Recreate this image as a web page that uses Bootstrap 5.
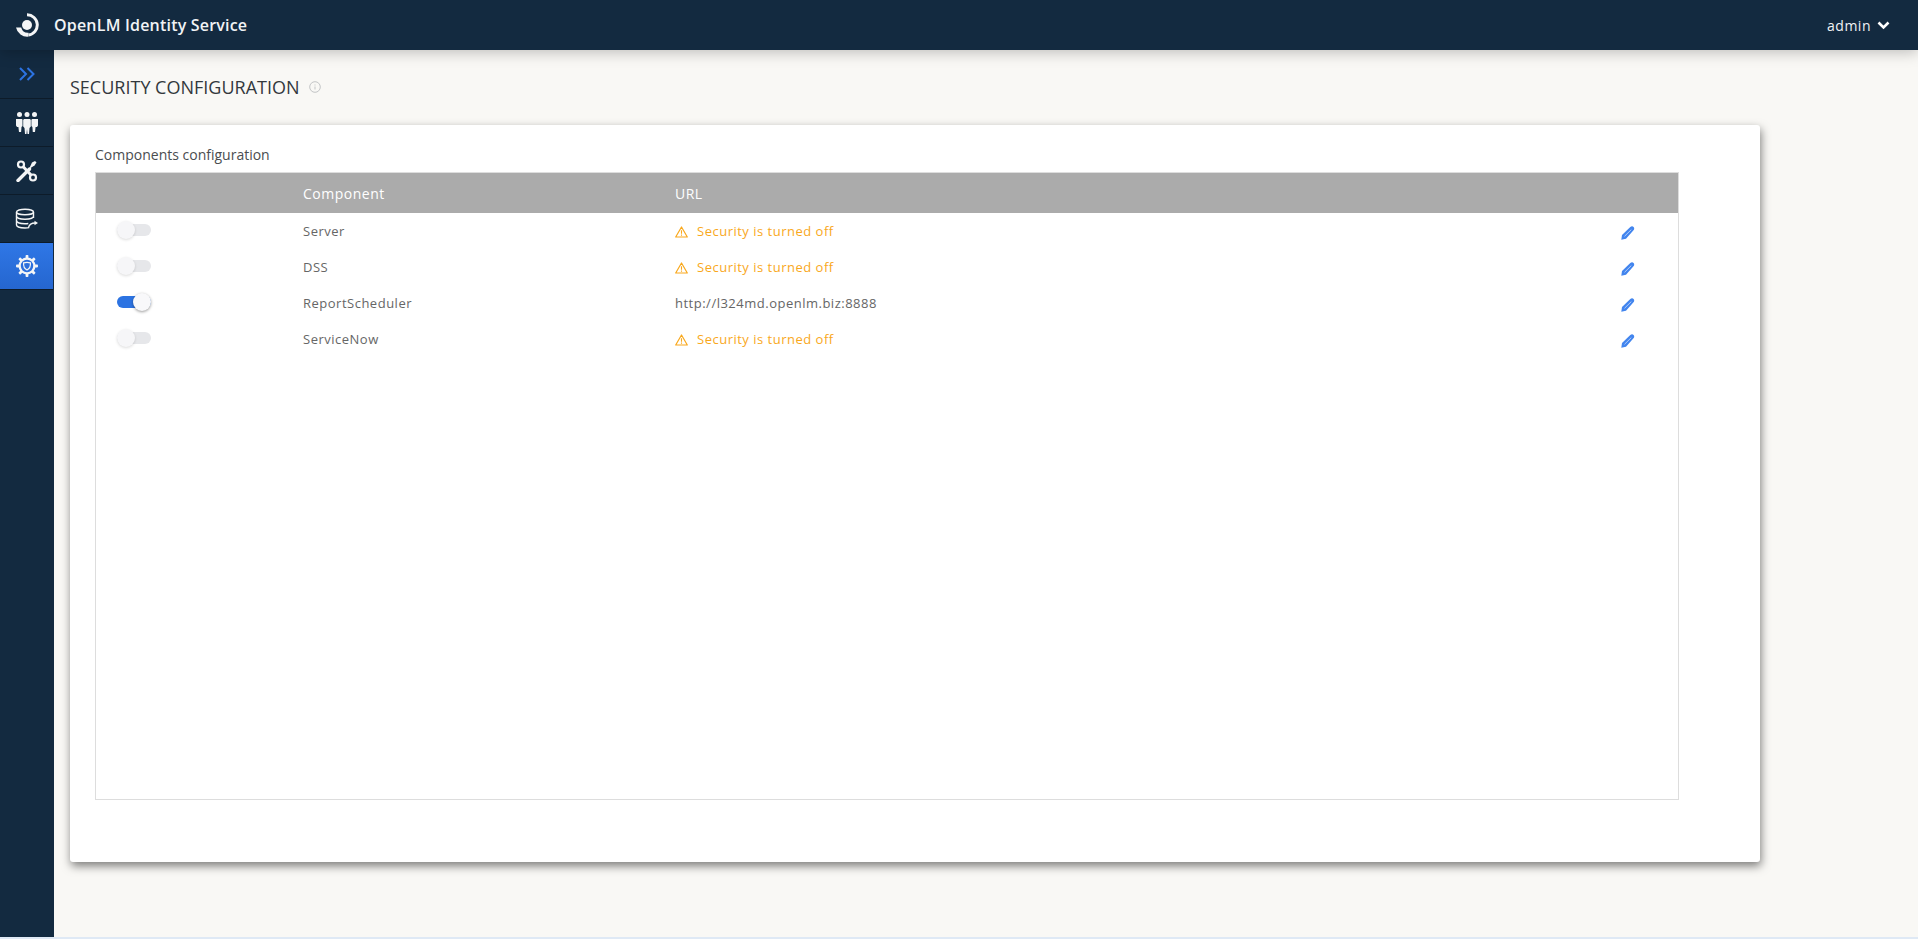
<!DOCTYPE html>
<html lang="en">
<head>
  <meta charset="UTF-8">
  <meta name="viewport" content="width=device-width, initial-scale=1.0">
  <title>OpenLM Identity Service</title>
  <link href="https://cdn.jsdelivr.net/npm/bootstrap@5.3.2/dist/css/bootstrap.min.css" rel="stylesheet">
  <style>
    html, body { height: 100%; }
    body { font-family: "Open Sans", "Liberation Sans", sans-serif; background: #dfe9f5; overflow: hidden; }
    .app-shell { height: 937px; }
    .top-bar { height: 50px; background: #132a40; color: #f1f3f5; padding: 0 28px 0 15px; box-shadow: 0 2px 14px rgba(0,0,0,.25); position: relative; z-index: 2; }
    .brand-text { font-size: 16px; font-weight: 600; margin-left: 15px; letter-spacing: .2px; }
    .user-name { font-size: 14px; font-weight: 500; letter-spacing: .5px; margin-right: 6px; }
    .side-rail { width: 54px; background: #132a40; flex: none; }
    .rail-item { height: 48px; border-bottom: 1px solid #0d1b29; margin-right: 1px; }
    .rail-item.is-first { height: 49px; }
    .rail-item.is-active { background: linear-gradient(#2f77e6, #2566cf); height: 47px; }
    .page-area { background: #f9f8f5; padding: 0 16px; min-width: 0; }
    .page-title { font-size: 18px; font-weight: 400; color: #33383d; margin: 0; line-height: 24px; padding-top: 25px; }
    .info-mark { margin-left: 9px; margin-top: 25px; }
    .panel-card { width: 1690px; height: 737px; margin-top: 26px; background: #fff; border-radius: 3px; padding: 20px 25px; box-shadow: 1px 4px 10px rgba(0,0,0,.5); }
    .panel-label { font-size: 14px; color: #4a4d50; line-height: 19px; margin-bottom: 8px; }
    .grid-box { width: 1584px; height: 628px; border: 1px solid #ddd; }
    .config-table { font-size: 13px; color: #666; letter-spacing: .5px; margin: 0; table-layout: fixed; width: 100%; }
    .config-table th { background: #ababab; color: #fff; font-size: 14px; font-weight: 500; height: 40px; padding: 0; border: 0; vertical-align: middle; letter-spacing: .5px; }
    .config-table td { height: 36px; padding: 2px 0 0; border: 0; vertical-align: middle; color: #666; }
    .col-toggle { width: 207px; }
    .col-name { width: 372px; }
    .col-edit { width: 57px; }
    .config-table td .warn-text { color: #f9a81c; font-weight: 400; }
    .warn-text svg { margin-right: 9px; vertical-align: -2px; }
    .sw-track { display: block; position: relative; width: 34px; height: 12px; margin: -5px 0 0 21px; border-radius: 6px; background: #e6e7ea; }
    .sw-track.is-on { background: #2c73e2; }
    .sw-knob { position: absolute; top: -3px; left: 0; width: 18px; height: 18px; border-radius: 50%; background: #f6f6f8; box-shadow: 0 1px 3px rgba(0,0,0,.14); }
    .sw-track.is-on .sw-knob { left: 16px; background: #f8f8fa; box-shadow: 0 1px 3px rgba(0,0,0,.4); }
    .edit-icon { display: block; margin-top: 2px; }
  </style>
</head>
<body>
  <div class="app-shell d-flex flex-column">
    <!-- Top bar -->
    <header class="top-bar d-flex align-items-center justify-content-between">
      <div class="d-flex align-items-center">
        <svg width="24" height="26" viewBox="0 0 24 26">
          <path d="M12 2.800a10.200 10.200 0 0 1 1.500 20.300" fill="none" stroke="#f4f5f6" stroke-width="3"/>
          <path d="M1 15.500h5.200a7 7 0 0 0 7.300 5.200v3.900A11.500 11.500 0 0 1 1 15.500z" fill="#f4f5f6"/>
          <circle cx="12" cy="13" r="5" fill="#f4f5f6"/>
        </svg>
        <span class="brand-text">OpenLM Identity Service</span>
      </div>
      <div class="d-flex align-items-center">
        <span class="user-name">admin</span>
        <svg width="13" height="9" viewBox="0 0 13 9"><path d="M1.500 1.500 6.500 6.500 11.500 1.500" fill="none" stroke="#fff" stroke-width="2.600"/></svg>
      </div>
    </header>

    <div class="d-flex flex-grow-1" style="min-height:0">
      <!-- Side rail -->
      <nav class="side-rail d-flex flex-column">
        <div class="rail-item is-first d-flex align-items-center justify-content-center">
          <svg width="16" height="14" viewBox="0 0 16 14"><path d="M1 1 7 7 1 13M8.500 1 14.500 7 8.500 13" fill="none" stroke="#2c73e2" stroke-width="2"/></svg>
        </div>
        <div class="rail-item d-flex align-items-center justify-content-center">
          <svg width="24" height="24" viewBox="0 0 24 24" fill="#f4f5f6">
            <circle cx="4.500" cy="3.500" r="2.500"/><circle cx="12" cy="3.500" r="2.500"/><circle cx="19.500" cy="3.500" r="2.500"/>
            <path d="M1 8h6.200l.3 1v6l-1 1-.4 5H4l-.6-5H2l-1-1.500z"/>
            <path d="M17 8h6v6.500L22 16h-1.400L20 21h-2.200l-.4-5-1-1V9z"/>
            <path d="M9 8h6l.8 1v6.500L14.500 17l-.5 6h-1.500L12 18l-.5 5H10l-.5-6-1.300-1.500V9z"/>
          </svg>
        </div>
        <div class="rail-item d-flex align-items-center justify-content-center">
          <svg width="22" height="22" viewBox="0 0 22 22">
            <circle cx="5" cy="4.500" r="3" fill="none" stroke="#f4f5f6" stroke-width="2.200"/>
            <circle cx="17" cy="17.500" r="3" fill="none" stroke="#f4f5f6" stroke-width="2.200"/>
            <path d="M7.200 6.700 15 15" stroke="#f4f5f6" stroke-width="3" fill="none"/>
            <path d="M2 20.500 13.500 9" stroke="#f4f5f6" stroke-width="3.400" stroke-linecap="round" fill="none"/>
            <path d="M13 9 16 2.500l3-1.500 1.500 1.500-2 3z" fill="#f4f5f6"/>
          </svg>
        </div>
        <div class="rail-item d-flex align-items-center justify-content-center">
          <svg width="24" height="22" viewBox="0 0 24 22" fill="none" stroke="#f4f5f6" stroke-width="1.400">
            <ellipse cx="10" cy="4" rx="8.500" ry="2.800"/>
            <path d="M1.500 4v13c0 1.700 3.800 3 8.500 3 1.500 0 3-.15 4.200-.4"/>
            <path d="M1.500 8.300c0 1.700 3.800 3 8.500 3s8.500-1.300 8.500-3M1.500 12.800c0 1.700 3.800 3 8.500 3 1.200 0 2.300-.1 3.300-.25M18.500 4v6"/>
            <path d="M13.500 19.500c.8-3 2.800-4.500 6.500-4.500" stroke-width="1.300"/>
            <path d="M19.500 12.800 23 15l-3.500 2.200z" fill="#f4f5f6" stroke="none"/>
          </svg>
        </div>
        <div class="rail-item is-active d-flex align-items-center justify-content-center">
          <svg width="22" height="22" viewBox="0 0 22 22">
            <g fill="#f4f5f6"><rect x="9.600" y="0" width="2.800" height="22" rx=".8"/><rect x="9.600" y="0" width="2.800" height="22" rx=".8" transform="rotate(45 11 11)"/><rect x="9.600" y="0" width="2.800" height="22" rx=".8" transform="rotate(90 11 11)"/><rect x="9.600" y="0" width="2.800" height="22" rx=".8" transform="rotate(135 11 11)"/></g>
            <circle cx="11" cy="11" r="8.500" fill="#f4f5f6"/>
            <circle cx="11" cy="11" r="6.200" fill="#2c6fdc"/>
            <path d="M7.600 7.800c2.200-.6 4.600-.6 6.800 0 .3 3.400-.8 6-3.400 7.200-2.600-1.200-3.700-3.800-3.400-7.200z" fill="none" stroke="#f4f5f6" stroke-width="1.200"/>
          </svg>
        </div>
      </nav>

      <!-- Page content -->
      <main class="page-area flex-grow-1">
        <div class="d-flex align-items-start">
          <h1 class="page-title">SECURITY CONFIGURATION</h1>
          <svg class="info-mark" width="12" height="24" viewBox="0 0 12 24">
            <circle cx="6" cy="12" r="5.300" fill="none" stroke="#c3c5c6" stroke-width="1"/>
            <path d="M6 9.500v1M6 11.500v3" stroke="#c3c5c6" stroke-width="1"/>
          </svg>
        </div>

        <section class="panel-card">
          <div class="panel-label">Components configuration</div>
          <div class="grid-box">
            <table class="table config-table">
              <colgroup><col class="col-toggle"><col class="col-name"><col><col class="col-edit"></colgroup>
              <thead>
                <tr><th></th><th>Component</th><th>URL</th><th></th></tr>
              </thead>
              <tbody id="configRows"></tbody>
            </table>
          </div>
        </section>
      </main>
    </div>
  </div>

  <script src="https://cdn.jsdelivr.net/npm/bootstrap@5.3.2/dist/js/bootstrap.bundle.min.js"></script>
  <script>
    const components = [
      { name: 'Server', on: false },
      { name: 'DSS', on: false },
      { name: 'ReportScheduler', on: true, url: 'http://l324md.openlm.biz:8888' },
      { name: 'ServiceNow', on: false }
    ];

    const warnIcon = `<svg width="13" height="12" viewBox="0 0 13 12"><path d="M6.500 1 12.300 11H.7z" fill="none" stroke="#f9a81c" stroke-width="1.200" stroke-linejoin="round"/><path d="M6.500 4.300v3.500M6.500 8.600v1.200" stroke="#f9a81c" stroke-width="1.100"/></svg>`;
    const pencilIcon = `<svg class="edit-icon" width="14" height="14" viewBox="0 0 14 14"><path d="M.3 13.700 1 9 9.300 .9c1-.9 2.500-.9 3.300 0s.9 2.300-.1 3.300L5 12.700z" fill="#4285ee"/><path d="M3.500 10.300 10.300 3.600" stroke="#bcd4fa" stroke-width=".9"/></svg>`;

    document.getElementById('configRows').innerHTML = components.map(c => `
      <tr>
        <td><span class="sw-track ${c.on ? 'is-on' : ''}"><span class="sw-knob"></span></span></td>
        <td>${c.name}</td>
        <td>${c.url ? c.url : `<span class="warn-text">${warnIcon}Security is turned off</span>`}</td>
        <td>${pencilIcon}</td>
      </tr>`).join('');
  </script>
</body>
</html>
